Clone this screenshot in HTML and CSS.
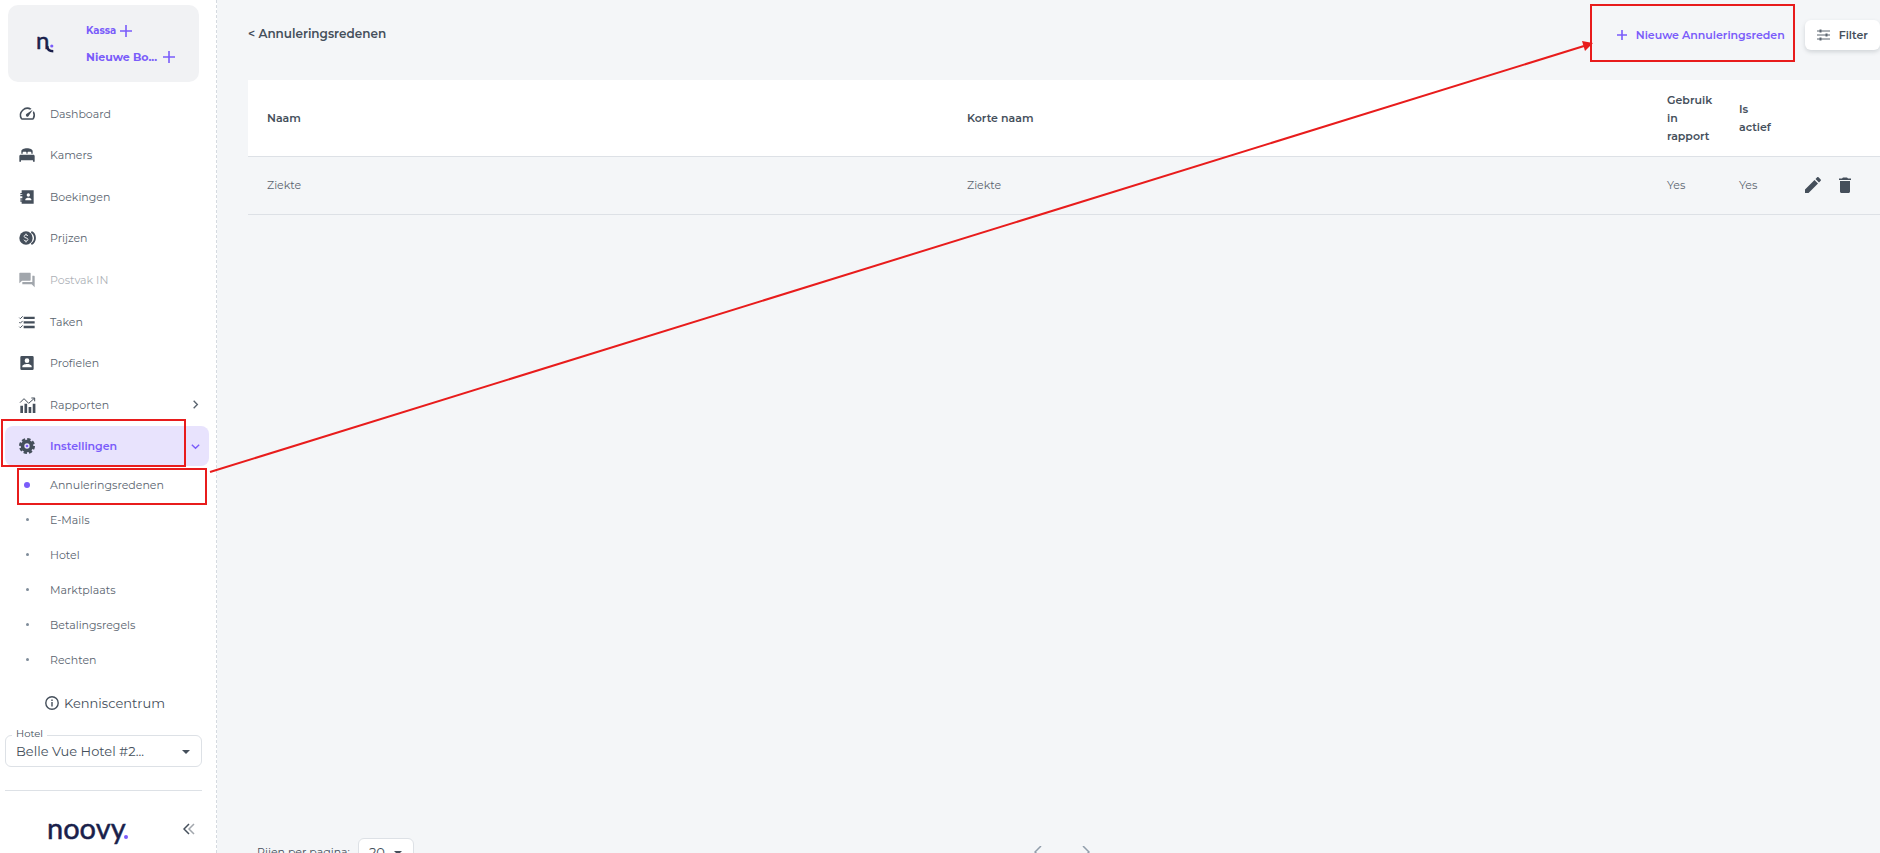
FILE: index.html
```html
<!DOCTYPE html>
<html lang="nl">
<head>
  <meta charset="utf-8">
  <meta name="viewport" content="width=device-width, initial-scale=1">
  <title>Noovy – Annuleringsredenen</title>
  <link rel="stylesheet" href="styles.css">
</head>
<body>
  <!-- Sidebar -->
  <aside class="sidebar">
    <div class="quick">
      <svg class="quick-logo" width="20" height="38" viewBox="0 0 20 38" role="img" aria-label="Noovy">
        <text class="logo-text" x="0" y="24" font-size="24">n</text>
        <path d="M11.300 21c0 3.500 2.200 5.300 6 5.300" fill="none" stroke="#1a1f4b" stroke-width="2.400"/>
        <circle cx="15.800" cy="21" r="1.600" fill="#7a5cfa"/>
      </svg>
      <div class="quick-links">
        <button class="quick-btn" type="button">Kassa
          <svg width="12" height="12" viewBox="0 0 12 12"><path d="M6 0v12M0 6h12"/></svg>
        </button>
        <button class="quick-btn quick-btn-lg" type="button">Nieuwe Bo...
          <svg width="12" height="12" viewBox="0 0 12 12"><path d="M6 0v12M0 6h12"/></svg>
        </button>
      </div>
    </div>

    <nav>
      <ul class="nav">
        <li><a class="nav-item" href="#">
          <svg class="icon" viewBox="1 2 21 21"><path d="m20.380 8.570-1.230 1.850a8 8 0 0 1-.22 7.580H5.070A8 8 0 0 1 15.580 6.850l1.850-1.230A10 10 0 0 0 3.350 19a2 2 0 0 0 1.720 1h13.850a2 2 0 0 0 1.740-1 10 10 0 0 0-.27-10.440z"/><path d="M10.590 15.410a2 2 0 0 0 2.830 0l5.660-8.490-8.490 5.660a2 2 0 0 0 0 2.830z"/></svg>
          Dashboard</a></li>
        <li><a class="nav-item" href="#">
          <svg class="icon" viewBox="0 0 24 24"><path d="M3.500 10V6c0-2 4-4 8.500-4s8.500 2 8.500 4v4h-2V8.500c0-.8-.5-1.500-1.500-1.500h-2.700c-1 0-1.500.7-1.500 1.500V10h-1.600V8.500c0-.8-.5-1.500-1.500-1.500H7c-1 0-1.500.7-1.500 1.500V10z"/><path d="M2.500 11.500h19c1 0 2 1 2 2V22H21v-2H3v2H.5v-8.500c0-1 1-2 2-2z"/></svg>
          Kamers</a></li>
        <li><a class="nav-item" href="#">
          <svg class="icon" viewBox="0 0 24 24"><path fill-rule="evenodd" d="M4 2h18v20H4v-3H2v-2h3v-1H2v-2h3v-3H2V9h3V8H2V6h2zM14 6.500a2.500 2.500 0 1 0 0 5 2.500 2.500 0 0 0 0-5zM9.500 17h9v-1.500c0-1.700-2.800-2.500-4.500-2.500s-4.500.8-4.500 2.500z"/></svg>
          Boekingen</a></li>
        <li><a class="nav-item" href="#">
          <svg class="icon" viewBox="0 0 24 24"><circle cx="10.500" cy="12" r="10"/><path d="M18.500 2.800a10.500 10.500 0 0 1 0 18.400" fill="none" stroke="#454f5b" stroke-width="2.800"/><path d="M13.300 9c-.5-1.300-1.500-1.700-2.800-1.700-1.500 0-2.800.7-2.800 2.200 0 3.200 5.700 1.500 5.700 4.800 0 1.500-1.400 2.300-2.900 2.300-1.600 0-2.700-.7-3.100-2M10.500 5.500v1.800m0 9.300v2" fill="none" stroke="#fff" stroke-width="1.400"/></svg>
          Prijzen</a></li>
        <li><a class="nav-item is-disabled" href="#">
          <svg class="icon" viewBox="0 0 24 24"><path d="M22.500 5.500H20V15H5v3.500h14l4.500 4.500V6.500c0-.6-.4-1-1-1z"/><path d="M17.500 12V2c0-.6-.4-1-1-1h-15c-.6 0-1 .4-1 1v15l4-4h12c.6 0 1-.4 1-1z"/></svg>
          Postvak IN</a></li>
        <li><a class="nav-item" href="#">
          <svg class="icon" viewBox="0 0 24 24"><path d="M7 4h16.500v3.600H7zM7 10.800h16.500v3.600H7zM7 17.600h16.500v3.600H7z"/><path d="M.5 5.500 2 7l3.500-3.500M.5 12.300 2 13.800l3.500-3.500M.5 19.100 2 20.600l3.500-3.500" fill="none" stroke="#454f5b" stroke-width="1.500"/></svg>
          Taken</a></li>
        <li><a class="nav-item" href="#">
          <svg class="icon" viewBox="0 0 24 24"><path fill-rule="evenodd" d="M20 1.500H4A2 2 0 0 0 2 3.500v17a2 2 0 0 0 2 2h16a2 2 0 0 0 2-2v-17a2 2 0 0 0-2-2zM12 5a3.500 3.500 0 1 1 0 7 3.500 3.500 0 0 1 0-7zM5 18.500V17c0-2.300 4.600-3.500 7-3.500s7 1.200 7 3.500v1.500z"/></svg>
          Profielen</a></li>
        <li><a class="nav-item" href="#">
          <svg class="icon" viewBox="0 0 24 24"><path d="M2 13h4v11H2zM8.200 10h4v14h-4zM14.400 15h4v9h-4zM20.600 10h4v14h-4z"/><path d="m1.500 8.500 6-6 7 7L23 2M18.500 1.500h5v5" fill="none" stroke="#454f5b" stroke-width="1.500"/></svg>
          Rapporten
          <svg class="chevron" viewBox="0 0 12 12"><path d="m4 2 4 4-4 4"/></svg></a></li>
        <li><a class="nav-item is-active" href="#">
          <svg class="icon" viewBox="0 0 24 24"><circle cx="12" cy="12" r="9.500"/><circle cx="12" cy="12" r="10.200" fill="none" stroke="#454f5b" stroke-width="3.600" stroke-dasharray="5 3.010"/><circle cx="12" cy="12" r="4" fill="#e8e3fd"/><circle cx="12" cy="12" r="2" fill="#7a5cfa"/></svg>
          Instellingen
          <svg class="chevron" viewBox="0 0 12 12"><path d="m2 4 4 4 4-4"/></svg></a></li>
      </ul>
      <ul class="subnav">
        <li><a class="subnav-item is-current" href="#">Annuleringsredenen</a></li>
        <li><a class="subnav-item" href="#">E-Mails</a></li>
        <li><a class="subnav-item" href="#">Hotel</a></li>
        <li><a class="subnav-item" href="#">Marktplaats</a></li>
        <li><a class="subnav-item" href="#">Betalingsregels</a></li>
        <li><a class="subnav-item" href="#">Rechten</a></li>
      </ul>
    </nav>

    <a class="help" href="#">
      <svg width="14" height="14" viewBox="0 0 14 14"><circle cx="7" cy="7" r="6.200"/><path d="M7 6v4.500M7 3.500V5"/></svg>
      Kenniscentrum
    </a>

    <div class="hotel">
      <label for="hotel">Hotel</label>
      <select id="hotel" class="select">
        <option>Belle Vue Hotel #2...</option>
      </select>
      <svg class="caret" width="8" height="4" viewBox="0 0 8 4"><path d="M0 0h8L4 4z"/></svg>
    </div>

    <div class="brand">
      <svg width="82" height="44" viewBox="0 0 82 44" role="img" aria-label="noovy.">
        <text class="logo-text" x="-1" y="31" font-size="29">noovy</text>
        <circle cx="78" cy="29" r="2" fill="#7a5cfa"/>
      </svg>
      <button class="collapse" type="button" aria-label="Menu inklappen">
        <svg width="12" height="12" viewBox="0 0 12 12"><path d="M6 1 1 6l5 5"/><path class="faded" d="M11 1 6 6l5 5"/></svg>
      </button>
    </div>
  </aside>

  <!-- Content -->
  <main class="main">
    <header class="header">
      <h1><a href="#">&lt; Annuleringsredenen</a></h1>
      <div class="actions">
        <button class="btn-new" type="button">
          <svg width="10" height="10" viewBox="0 0 10 10"><path d="M5 0v10M0 5h10"/></svg>
          Nieuwe Annuleringsreden
        </button>
        <button class="btn-filter" type="button">
          <svg width="13" height="12" viewBox="0 0 13 12"><path d="M0 2h13M0 6h13M0 10h13"/><path class="knobs" d="M3.500.5v3M9.500 4.500v3M3.500 8.500v3"/></svg>
          Filter
        </button>
      </div>
    </header>

    <table class="table">
      <thead>
        <tr>
          <th class="col-name">Naam</th>
          <th>Korte naam</th>
          <th class="col-flag">Gebruik in rapport</th>
          <th class="col-flag">Is<br>actief</th>
          <th class="col-actions"></th>
        </tr>
      </thead>
      <tbody>
        <tr>
          <td>Ziekte</td>
          <td>Ziekte</td>
          <td>Yes</td>
          <td>Yes</td>
          <td>
            <div class="row-actions">
              <button type="button" aria-label="Bewerken"><svg viewBox="0 0 18 18"><path d="M1 13.500V17h3.500L14 7.500 10.500 4zM16.700 4.800c.4-.4.4-.9 0-1.300l-2.200-2.200c-.4-.4-.9-.4-1.300 0L11.500 3 15 6.500z"/></svg></button>
              <button type="button" aria-label="Verwijderen"><svg viewBox="0 0 18 18"><path d="M4 15.500C4 16.300 4.700 17 5.500 17h7c.8 0 1.500-.7 1.500-1.500V5H4zM15 2.500h-3l-1-1H7l-1 1H3V4h12z"/></svg></button>
            </div>
          </td>
        </tr>
      </tbody>
    </table>

    <footer class="pager">
      <label for="rows">Rijen per pagina:</label>
      <div class="rows">
        <select id="rows" class="select">
          <option>20</option>
        </select>
        <svg class="caret" width="8" height="4" viewBox="0 0 8 4"><path d="M0 0h8L4 4z"/></svg>
      </div>
      <div class="pages">
        <button type="button" aria-label="Vorige"><svg width="8" height="12" viewBox="0 0 8 12"><path d="M7 0 1 6l6 6"/></svg></button>
        <button type="button" aria-label="Volgende"><svg width="8" height="12" viewBox="0 0 8 12"><path d="m1 0 6 6-6 6"/></svg></button>
      </div>
    </footer>
  </main>

  <!-- Markeringen over de pagina -->
  <svg class="marks" width="1880" height="853" viewBox="0 0 1880 853" aria-hidden="true">
    <rect x="2" y="420" width="183" height="46"/>
    <rect x="18" y="469" width="188" height="35"/>
    <rect x="1591" y="5" width="203" height="56"/>
    <path d="M210 472 1584 46"/>
    <path class="head" d="M1593 43l-8 8-3-10z"/>
  </svg>
</body>
</html>
```

FILE: styles.css
```css
* { box-sizing: border-box; margin: 0; padding: 0; }
:root {
  --bg: #f4f6f8;
  --text: #454f5b;
  --muted: #5a646f;
  --primary: #7a5cfa;
  --line: #dde1e6;
  --navy: #1a1f4b;
  --mark: #e81c1c;
}
body {
  display: flex;
  height: 100vh;
  overflow: hidden;
  font-family: Montserrat, Inter, sans-serif;
  font-size: 11px;
  background: var(--bg);
  color: var(--text);
}
a { color: inherit; text-decoration: none; }
ul { list-style: none; }
button {
  font: inherit;
  color: inherit;
  background: none;
  border: 0;
  cursor: pointer;
}
.logo-text { font-family: Lato, sans-serif; fill: var(--navy); stroke: var(--navy); stroke-width: 0.5px; }

/* Sidebar */
.sidebar {
  flex: none;
  width: 217px;
  padding: 5px 7px 0 5px;
  background: #fff;
  border-right: 1px dashed #d5dae0;
}
.quick {
  display: flex;
  align-items: center;
  width: 191px;
  height: 77px;
  margin-left: 3px;
  padding-left: 28px;
  border-radius: 10px;
  background: #f1f2f4;
}
.quick-links {
  display: flex;
  flex-direction: column;
  align-items: flex-start;
  gap: 10px;
  margin-left: 30px;
}
.quick-btn {
  display: flex;
  align-items: center;
  gap: 4px;
  font-size: 10px;
  line-height: 16px;
  font-weight: 700;
  color: var(--primary);
}
.quick-btn-lg { font-size: 11px; gap: 6px; }
.quick-btn svg, .btn-new svg { stroke: var(--primary); stroke-width: 1.6; fill: none; }

.nav {
  display: grid;
  grid-auto-rows: 1fr;
  height: 374px;
  margin-top: 11px;
}
.nav li { padding: 1px 0; }
.nav-item {
  display: flex;
  align-items: center;
  gap: 15px;
  height: 100%;
  padding: 0 8px 0 14px;
  border-radius: 8px;
  color: var(--muted);
}
.nav-item .icon { width: 16px; height: 16px; fill: var(--text); overflow: visible; }
.chevron {
  width: 11px;
  height: 11px;
  margin-left: auto;
  fill: none;
  stroke: currentColor;
  stroke-width: 1.5;
}
.is-disabled { opacity: 0.5; }
.is-active {
  background: #e8e3fd;
  color: var(--primary);
  font-weight: 600;
}

.subnav-item {
  display: flex;
  align-items: center;
  height: 35px;
  padding-left: 21px;
  color: var(--muted);
}
.subnav-item::before {
  content: "";
  width: 3px;
  height: 3px;
  margin-right: 21px;
  border-radius: 50%;
  background: #7f8c9a;
}
.is-current { padding-left: 19px; }
.is-current::before { width: 6px; height: 6px; margin-right: 20px; background: var(--primary); }

.help {
  display: flex;
  align-items: center;
  gap: 5px;
  height: 20px;
  margin: 16px 0 0 40px;
  font-size: 13px;
}
.help svg { fill: none; stroke: var(--text); stroke-width: 1.4; }

/* Selects */
.select {
  appearance: none;
  width: 100%;
  height: 32px;
  padding: 0 10px;
  font: inherit;
  font-size: 13px;
  color: var(--text);
  background: #fff;
  border: 1px solid var(--line);
  border-radius: 6px;
}
.caret { position: absolute; right: 12px; top: 15px; fill: var(--text); }
.hotel {
  position: relative;
  width: 197px;
  margin-top: 22px;
  padding-bottom: 23px;
  border-bottom: 1px solid var(--line);
}
.hotel label {
  position: absolute;
  left: 7px;
  top: -7px;
  padding: 0 4px;
  font-size: 10px;
  line-height: 12px;
  background: #fff;
}

.brand {
  display: flex;
  align-items: center;
  justify-content: space-between;
  padding: 17px 14px 0 43px;
}
.collapse svg { fill: none; stroke: var(--text); stroke-width: 1.5; }
.collapse .faded { opacity: 0.5; }

/* Content */
.main {
  flex: 1;
  display: flex;
  flex-direction: column;
  min-width: 0;
  padding-left: 31px;
}
.header {
  display: flex;
  align-items: flex-start;
  justify-content: space-between;
  height: 80px;
  padding-top: 20px;
}
.header h1 { font-size: 12px; line-height: 28px; font-weight: 600; }
.actions { display: flex; gap: 20px; }
.btn-new, .btn-filter {
  display: flex;
  align-items: center;
  height: 30px;
  font-weight: 600;
}
.btn-new { gap: 9px; color: var(--primary); }
.btn-filter {
  gap: 9px;
  padding: 0 12px;
  border-radius: 6px;
  background: #fff;
  box-shadow: 0 2px 4px rgba(69, 79, 91, 0.2);
}
.btn-filter svg { stroke: var(--muted); stroke-width: 1; }
.btn-filter .knobs { stroke-width: 2; }

.table {
  width: 100%;
  table-layout: fixed;
  border-collapse: collapse;
}
.table th, .table td {
  padding: 0 0 0 19px;
  text-align: left;
  border-bottom: 1px solid var(--line);
}
.table th {
  height: 76px;
  line-height: 18px;
  font-weight: 600;
  background: #fff;
}
.table td { height: 58px; color: var(--muted); }
.table .col-name { width: calc(50% - 119px); }
.col-flag { width: 72px; }
.col-actions { width: 88px; }
.row-actions { display: flex; gap: 14px; margin-left: -7px; }
.row-actions button { width: 18px; height: 18px; }
.row-actions svg { display: block; fill: var(--text); }

/* Pagination */
.pager {
  display: flex;
  align-items: flex-start;
  flex: none;
  height: 15px;
  margin-top: auto;
  padding-left: 9px;
}
.pager label { line-height: 28px; }
.rows { position: relative; width: 56px; margin-left: 8px; }
.rows .caret { top: 13px; }
.rows .select { height: 28px; }
.pages { display: flex; gap: 40px; margin: 8px auto 0 620px; }
.pages svg { fill: none; stroke: #919eab; stroke-width: 1.5; }

/* Marks */
.marks {
  position: absolute;
  top: 0;
  left: 0;
  fill: none;
  stroke: var(--mark);
  stroke-width: 2;
  pointer-events: none;
}
.marks .head { fill: var(--mark); stroke: none; }
```
